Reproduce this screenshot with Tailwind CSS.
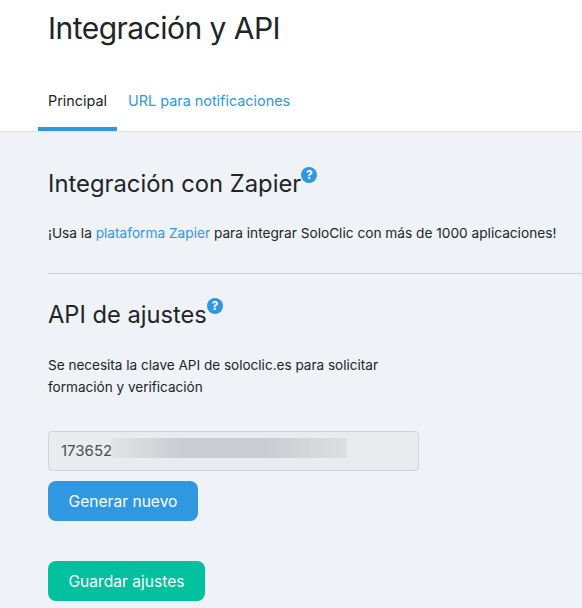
<!DOCTYPE html>
<html lang="es">
  <head>
    <meta charset="UTF-8" />
    <title>Integración y API</title>
    <script src="https://cdn.jsdelivr.net/npm/@tailwindcss/browser@4"></script>
  </head>
  <body class="h-[608px] overflow-hidden bg-[#eff2f7] font-['Inter',sans-serif] text-[#212529]">
    <!-- header -->
    <div class="h-[132px] border-b border-[#dee2e6] bg-white">
      <h1 class="pl-12 pt-[8px] text-[30px] leading-[40px] font-normal tracking-[-0.53px]">Integración y API</h1>
      <div class="mt-[31px] flex pl-[38px]">
        <a class="h-[52px] border-b-4 border-[#3097e1] px-[10px] pt-[10px] text-[14.4px] leading-6">Principal</a>
        <a class="h-[52px] px-[11px] pt-[10px] text-[14.4px] leading-6 text-[#3097e1]">URL para notificaciones</a>
      </div>
    </div>

    <div class="pl-12">
      <!-- zapier -->
      <div class="flex items-start pt-[36px]">
        <h2 class="text-[23.8px] leading-8 font-normal">Integración con Zapier</h2>
        <span class="mt-[-1px] flex h-4 w-4 items-center justify-center rounded-full bg-[#3097e1] text-[12px] leading-none font-bold text-white">?</span>
      </div>
      <p class="mt-[21px] text-[13.68px] leading-6 whitespace-nowrap">¡Usa la <a class="text-[#3097e1]">plataforma Zapier</a> para integrar SoloClic con más de 1000 aplicaciones!</p>
      <hr class="mt-[28px] border-[#cfd3d8]" />

      <!-- api -->
      <div class="flex items-start pt-[25px]">
        <h2 class="text-[23.7px] leading-8 font-normal">API de ajustes</h2>
        <span class="mt-[-1px] flex h-4 w-4 items-center justify-center rounded-full bg-[#3097e1] text-[12px] leading-none font-bold text-white">?</span>
      </div>
      <p class="mt-[23px] w-[371px] text-[13.55px] leading-[22px]">Se necesita la clave API de soloclic.es para solicitar formación y verificación</p>

      <div class="relative mt-[33px] flex h-10 w-[371px] items-center rounded border border-[#ced4da] bg-[#e9ecef] px-3 text-[15px] text-[#495057]">
        173652
        <div class="absolute top-[6px] left-[62px] h-5 w-[236px] bg-[linear-gradient(90deg,#e2e5e8,#c9ccd0_30%,#c9ccd0_65%,#dcdfe2)]"></div>
      </div>
      <button class="mt-[10px] block h-10 w-[150px] rounded-lg bg-[#3097e1] pt-px text-[15.6px] text-white">Generar nuevo</button>
      <button class="mt-10 block h-10 w-[157px] rounded-lg bg-[#00c09d] pt-px text-[15.6px] text-white">Guardar ajustes</button>
    </div>
  </body>
</html>
